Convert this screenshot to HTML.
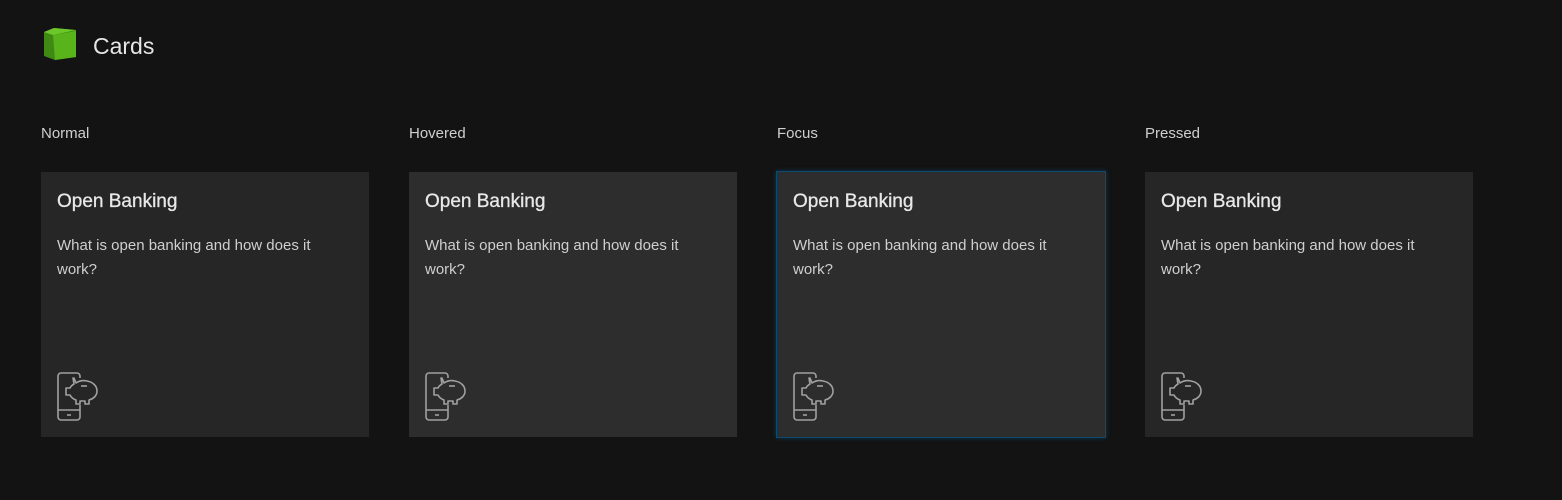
<!DOCTYPE html>
<html><head><style>
body{margin:0;background:#131313;width:1562px;height:500px;position:relative;font-family:"Liberation Sans",sans-serif;overflow:hidden}
.t{position:absolute;left:93px;top:33px;color:#e6e6e6;font-size:23px}
.lbl{position:absolute;top:125px;color:#cfcfcf;font-size:15px}
.card{position:absolute;top:172px;width:328px;height:265px;background:#262626}
.card h3{margin:0;position:absolute;left:16px;top:19px;font-size:19px;font-weight:normal;color:#e8e8e8;-webkit-text-stroke:0.3px #e8e8e8}
.card p{margin:0;position:absolute;left:16px;top:62px;width:290px;font-size:15px;line-height:24px;color:#cfcfcf}
.card svg{position:absolute;left:16px;top:200px}
</style></head><body>
<svg style="position:absolute;left:43px;top:27px" width="34" height="34" viewBox="0 0 34 34">
<polygon points="1,5 11,1 33,3 33,30 12,33 1,29" fill="#3f8a12"/>
<polygon points="10,8 33,4 33,30 12,33" fill="#58b41a"/>
<polygon points="1,5 11,1 33,3 10,8" fill="#6cc82a"/>
</svg>
<div class="t">Cards</div>
<div class="lbl" style="left:41px">Normal</div>
<div class="lbl" style="left:409px">Hovered</div>
<div class="lbl" style="left:777px">Focus</div>
<div class="lbl" style="left:1145px">Pressed</div>
<div class="card" style="left:41px"><h3>Open Banking</h3><p>What is open banking and how does it work?</p>ICON</div>
<div class="card" style="left:409px;background:#2d2d2d"><h3>Open Banking</h3><p>What is open banking and how does it work?</p>ICON</div>
<div class="card" style="left:777px;background:#2d2d2d;box-shadow:0 0 0 1px #0c4a6e,0 0 4px 1px #0a3a5a"><h3>Open Banking</h3><p>What is open banking and how does it work?</p>ICON</div>
<div class="card" style="left:1145px"><h3>Open Banking</h3><p>What is open banking and how does it work?</p>ICON</div>
<script>
var ic='<svg width="44" height="50" viewBox="0 0 44 50" fill="none" stroke="#a0a0a0" stroke-width="1.6" stroke-linejoin="round"><path d="M23 6V4a3 3 0 0 0-3-3H4a3 3 0 0 0-3 3v41a3 3 0 0 0 3 3h16a3 3 0 0 0 3-3V33"/><line x1="1" y1="38" x2="23" y2="38"/><line x1="10" y1="43" x2="14" y2="43"/><path d="M17 6l2 5c3-2 7-3 11-2 6 1 10 5 10 10 0 5-4 8-8 9v4h-4v-3h-5v3h-4v-4c-3-1-5-3-6-5h-4v-7h4c1-2 2-3 4-4l-1-6z"/><line x1="24" y1="14" x2="30" y2="14"/></svg>';
document.querySelectorAll('.card').forEach(function(c){c.innerHTML=c.innerHTML.replace('ICON',ic)});
</script>
</body></html>
